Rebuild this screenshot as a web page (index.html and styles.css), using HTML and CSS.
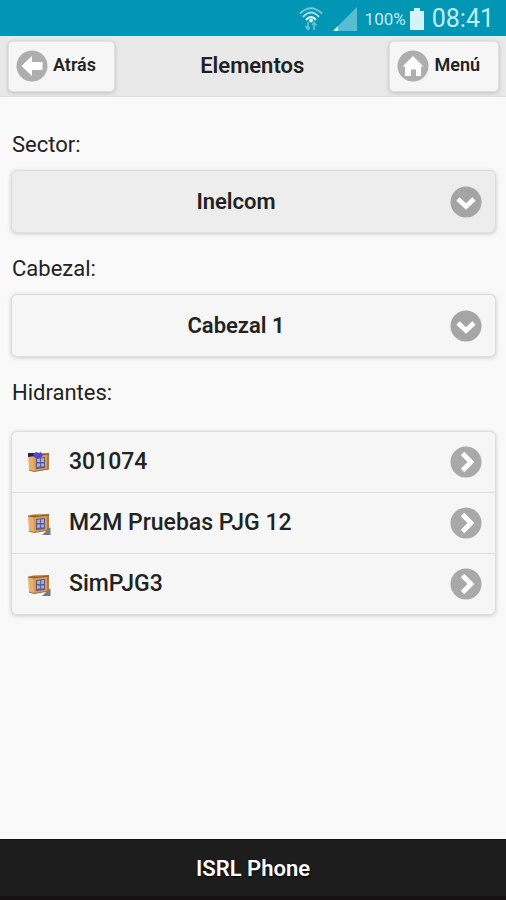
FILE: index.html
```
<!DOCTYPE html>
<html lang="es">
<head>
<meta charset="utf-8">
<meta name="viewport" content="width=device-width, initial-scale=1">
<title>Elementos</title>
<link rel="stylesheet" href="styles.css">
</head>
<body>
<svg class="defs" width="0" height="0" aria-hidden="true">
  <symbol id="chevron-down" viewBox="0 0 32 32"><circle cx="16" cy="16" r="15.5" fill="#a5a5a5"/><path d="M8 13l8 7.500 8-7.500" fill="none" stroke="#fff" stroke-width="4.800"/></symbol>
  <symbol id="chevron-right" viewBox="0 0 32 32"><circle cx="16" cy="16" r="15.5" fill="#a9a9a9"/><path d="M12.5 7.500l8.500 8.500-8.500 8.500" fill="none" stroke="#fff" stroke-width="4.800"/></symbol>
  <symbol id="box" viewBox="0 0 24 24">
    <path d="M1 5l5-1.500 16-.5v1L8 5z" fill="#ad7437"/>
    <path d="M1 5l6 .5v16L2 20z" fill="#e9b06c"/>
    <path d="M6 5.500L22 4v15L7 21.500z" fill="#dc9850"/>
    <path d="M20 4h2v15l-2 .5z" fill="#b8773c"/>
    <path d="M1 5l6 .7L22 4" fill="none" stroke="#8a5728" stroke-width="1.200"/>
    <path d="M9 8l9-1v11l-9 1z" fill="#56608f"/>
    <path d="M10 9l3-.4v3.400h-3zM14 8.500l3-.4V12h-3zM10 13.500h3v3l-3 .4zM14 13.500h3v2.700l-3 .4z" fill="#b3a3d6"/>
    <path d="M2 20l5 1.500L22 19" fill="none" stroke="#9b6e42"/>
  </symbol>
</svg>

<div class="status">
  <svg class="wifi" viewBox="0 0 24 26" aria-hidden="true">
    <g fill="none" stroke="#73c9dc" stroke-width="2"><path d="M1 7.500Q12-3 23 7.500"/><path d="M4 11Q12 2 20 11" stroke="#a5dce8"/><path d="M7 14Q12 8 17 14" stroke="#e0f5f9"/></g>
    <circle cx="12" cy="14.500" r="2" fill="#e0f5f9"/>
    <path d="M9 16v7M6.500 20L9 23.500 11 21M15 24v-7M13 19l2-2.500 2.500 3" fill="none" stroke="#65bfd2" stroke-width="1.800"/>
  </svg>
  <svg class="signal" viewBox="0 0 24 24" aria-hidden="true"><path d="M24 0v24H0z" fill="#58bdd1"/><path d="M5 19v5H0z" fill="#d5f2f7"/></svg>
  <span class="charge">100%</span>
  <svg class="battery" viewBox="0 0 16 24" aria-hidden="true"><path d="M5 1h6v3h4v19H1V4h4z" fill="#d2f3f9"/></svg>
  <time class="clock">08:41</time>
</div>

<header class="bar">
  <button class="nav" type="button">
    <svg class="disc" viewBox="0 0 32 32" aria-hidden="true"><circle cx="16" cy="16" r="15.500" fill="#aeaeae"/><path d="M5.500 16L16 6v6h10.500v8H16v6z" fill="#fff"/></svg>
    <span>Atrás</span>
  </button>
  <h1>Elementos</h1>
  <button class="nav" type="button">
    <svg class="disc" viewBox="0 0 32 32" aria-hidden="true"><circle cx="16" cy="16" r="15.500" fill="#aeaeae"/><path d="M5.500 16.500L16 6l10.500 10.500H24V26h-5v-6.500h-5V26H8v-9.500z" fill="#fff"/></svg>
    <span>Menú</span>
  </button>
</header>

<main>
  <div class="field">
    <label for="sector">Sector:</label>
    <div class="picker pressed">
      <select id="sector"><option>Inelcom</option></select>
      <svg class="disc" aria-hidden="true"><use href="#chevron-down"/></svg>
    </div>
  </div>
  <div class="field">
    <label for="cabezal">Cabezal:</label>
    <div class="picker">
      <select id="cabezal"><option>Cabezal 1</option></select>
      <svg class="disc" aria-hidden="true"><use href="#chevron-down"/></svg>
    </div>
  </div>
  <h2 id="hidrantes">Hidrantes:</h2>
  <ul class="list" aria-labelledby="hidrantes">
    <li><a href="#">
      <svg class="thumb" viewBox="0 0 24 24" aria-hidden="true"><use href="#box"/><path d="M1 3h8v3l-8 1z" fill="#28224e"/><path d="M6 4l3-2 3 1 2-1 2 3-2 3H8z" fill="#5349c8"/></svg>
      <span>301074</span>
      <svg class="disc" aria-hidden="true"><use href="#chevron-right"/></svg>
    </a></li>
    <li><a href="#">
      <svg class="thumb" viewBox="0 0 24 24" aria-hidden="true"><use href="#box"/><path d="M23.500 16v8H15z" fill="#777b7c"/></svg>
      <span>M2M Pruebas PJG 12</span>
      <svg class="disc" aria-hidden="true"><use href="#chevron-right"/></svg>
    </a></li>
    <li><a href="#">
      <svg class="thumb" viewBox="0 0 24 24" aria-hidden="true"><use href="#box"/><path d="M23.500 16v8H15z" fill="#777b7c"/></svg>
      <span>SimPJG3</span>
      <svg class="disc" aria-hidden="true"><use href="#chevron-right"/></svg>
    </a></li>
  </ul>
</main>

<footer>ISRL Phone</footer>
</body>
</html>
```
FILE: styles.css
```
* { box-sizing: border-box; }

body {
  margin: 0;
  min-height: 100vh;
  display: flex;
  flex-direction: column;
  background: #f9f9f9;
  color: #222;
  font-family: Roboto, "Liberation Sans", sans-serif;
  font-size: 22px;
  line-height: 28px;
}

.defs { position: absolute; }

.status {
  height: 36px;
  display: flex;
  align-items: center;
  justify-content: flex-end;
  padding: 2px 12px 0 0;
  background: #0096b4;
  color: #c3ebf3;
}
.wifi { width: 24px; height: 26px; margin-right: 10px; }
.signal { width: 24px; height: 24px; margin-right: 8px; }
.charge { font-size: 17px; }
.battery { width: 16px; height: 24px; margin: 0 7px 0 3px; }
.clock { font-size: 25px; }

.bar {
  display: flex;
  align-items: center;
  justify-content: space-between;
  height: 61px;
  padding: 0 7px 0 8px;
  background: #e9e9e9;
  border-bottom: 1px solid #ddd;
}
h1 {
  margin: 0;
  font-size: 22px;
  font-weight: 600;
}
.nav {
  display: flex;
  align-items: center;
  gap: 5px;
  height: 51px;
  padding: 0 18px 0 7px;
  border: 1px solid #e1e1e1;
  border-radius: 5px;
  background: #f6f6f6;
  box-shadow: 0 1px 4px rgba(0, 0, 0, .2);
  color: #222;
  font: 600 18px Roboto, "Liberation Sans", sans-serif;
}
.nav span { padding-bottom: 3px; }
.disc { flex: none; width: 32px; height: 32px; }

main {
  flex: 1;
  padding: 34px 10px 24px 11px;
}
.field { margin-bottom: 22px; }
label, h2 {
  display: block;
  margin: 0 0 11px 1px;
  font-size: 22px;
  font-weight: 400;
}
h2 { margin-bottom: 24px; }

.picker {
  display: grid;
  align-items: center;
  background: #f6f6f6;
  border: 1px solid #ddd;
  border-radius: 6px;
  box-shadow: 0 1px 4px rgba(0, 0, 0, .18);
}
.picker > * { grid-area: 1 / 1; }
.picker .disc {
  justify-self: end;
  margin-right: 13px;
  pointer-events: none;
}
.pressed { background: #ededed; }
select {
  appearance: none;
  width: 100%;
  height: 61px;
  padding: 0 35px 0 0;
  border: 0;
  background: transparent;
  color: #222;
  font: 600 22px Roboto, "Liberation Sans", sans-serif;
  text-align-last: center;
}

.list {
  margin: 0;
  padding: 0;
  list-style: none;
  background: #f6f6f6;
  border: 1px solid #ddd;
  border-radius: 6px;
  box-shadow: 0 1px 4px rgba(0, 0, 0, .18);
}
.list li + li { border-top: 1px solid #ddd; }
.list a {
  display: flex;
  align-items: center;
  height: 60px;
  padding: 0 13px 0 15px;
  color: #222;
  font-size: 23px;
  font-weight: 500;
  text-decoration: none;
}
.list span { flex: 1; }
.thumb { width: 24px; height: 24px; margin-right: 18px; }

footer {
  height: 61px;
  padding-top: 15px;
  border-top: 1px solid #111;
  border-bottom: 4px solid #170f12;
  background: #1d1d1d;
  color: #fff;
  font-weight: 600;
  text-align: center;
  text-shadow: 0 1px 2px #000;
}
```
